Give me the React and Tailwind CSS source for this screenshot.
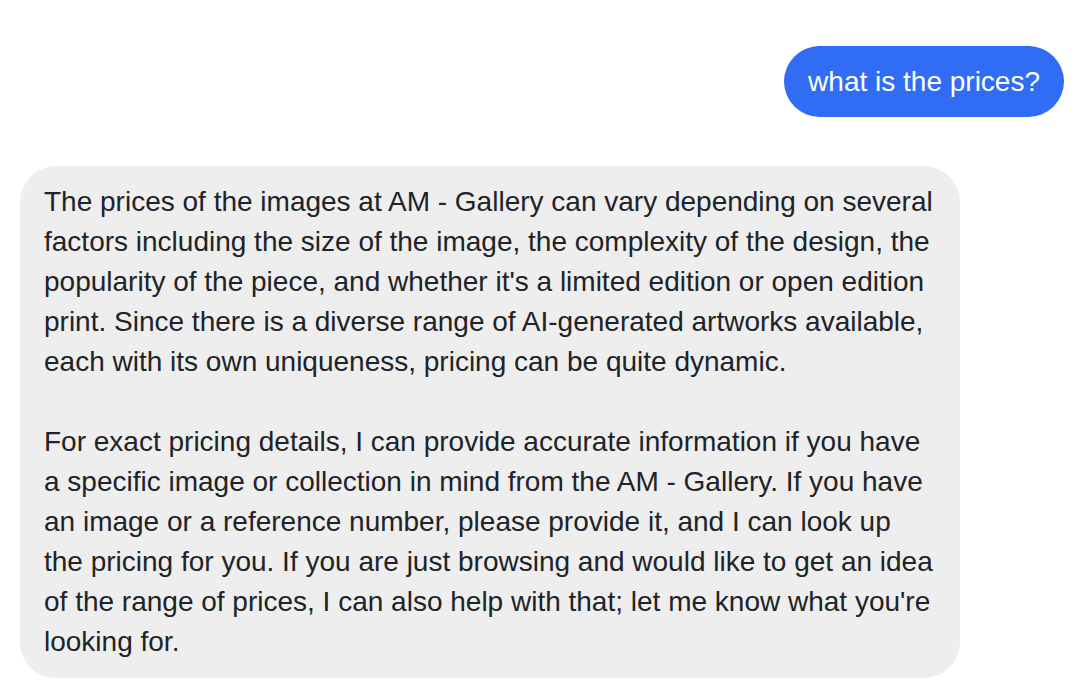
const para1 = [
  'The prices of the images at AM - Gallery can vary depending on several',
  'factors including the size of the image, the complexity of the design, the',
  "popularity of the piece, and whether it's a limited edition or open edition",
  'print. Since there is a diverse range of AI-generated artworks available,',
  'each with its own uniqueness, pricing can be quite dynamic.',
];

const para2 = [
  'For exact pricing details, I can provide accurate information if you have',
  'a specific image or collection in mind from the AM - Gallery. If you have',
  'an image or a reference number, please provide it, and I can look up',
  'the pricing for you. If you are just browsing and would like to get an idea',
  'of the range of prices, I can also help with that; let me know what you\'re',
  'looking for.',
];

export default function App() {
  return (
    <div className="min-h-[694px] w-full bg-white font-['Liberation_Sans',Arial,sans-serif]">
      <div className="flex flex-col pt-[46px] pl-5 pr-[14px]">
        <div className="flex justify-end">
          <div className="h-[71px] px-6 flex items-center rounded-full bg-[#306cf4] text-white text-[28px] leading-none">
            what is the prices?
          </div>
        </div>

        <div className="mt-[49px] w-[940px] rounded-[36px] bg-[#eeeeee] px-6 py-4 text-[28px] leading-[40px] text-[#202327] whitespace-nowrap">
          {para1.map((line) => (
            <div key={line}>{line}</div>
          ))}
          <div className="h-10" />
          {para2.map((line) => (
            <div key={line}>{line}</div>
          ))}
        </div>
      </div>
    </div>
  );
}
